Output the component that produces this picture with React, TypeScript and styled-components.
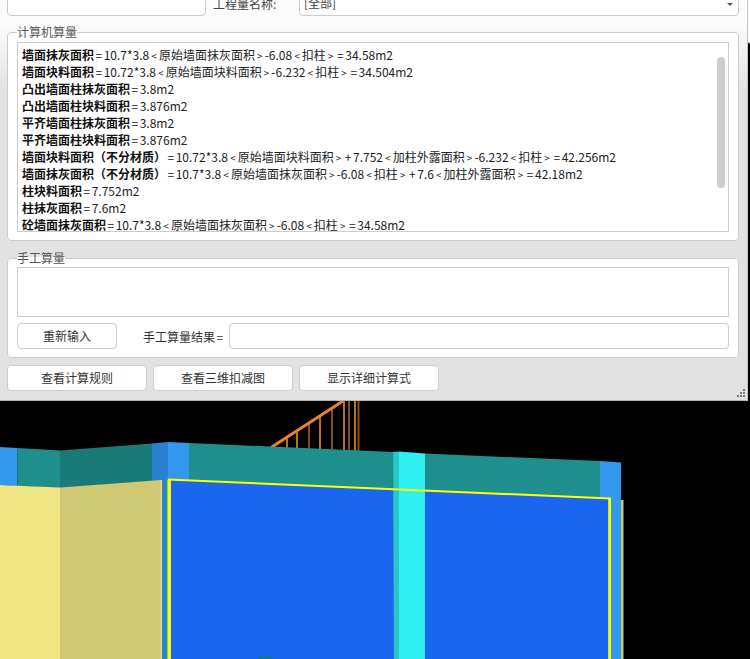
import React from 'react';
import styled, { createGlobalStyle } from 'styled-components';

const GlobalStyle = createGlobalStyle`
  html, body {
    margin: 0;
    padding: 0;
    background: linear-gradient(#fff 0, #fff 42px, #000 44px);
  }
  body {
    width: 750px;
    height: 659px;
    overflow: hidden;
    font-family: 'Noto Sans CJK SC', 'Liberation Sans', sans-serif;
    font-size: 12px;
    color: #222;
  }
`;

const lines: [string, string][] = [
  ['墙面抹灰面积', '=10.7*3.8<原始墙面抹灰面积>-6.08<扣柱>=34.58m2'],
  ['墙面块料面积', '=10.72*3.8<原始墙面块料面积>-6.232<扣柱>=34.504m2'],
  ['凸出墙面柱抹灰面积', '=3.8m2'],
  ['凸出墙面柱块料面积', '=3.876m2'],
  ['平齐墙面柱抹灰面积', '=3.8m2'],
  ['平齐墙面柱块料面积', '=3.876m2'],
  ['墙面块料面积（不分材质）', '=10.72*3.8<原始墙面块料面积>+7.752<加柱外露面积>-6.232<扣柱>=42.256m2'],
  ['墙面抹灰面积（不分材质）', '=10.7*3.8<原始墙面抹灰面积>-6.08<扣柱>+7.6<加柱外露面积>=42.18m2'],
  ['柱块料面积', '=7.752m2'],
  ['柱抹灰面积', '=7.6m2'],
  ['砼墙面抹灰面积', '=10.7*3.8<原始墙面抹灰面积>-6.08<扣柱>=34.58m2'],
];

// the operators are set wider than the rest of the text
const renderFormula = (formula: string) =>
  formula.split(/([<>=+])/).map((part, i) =>
    /^[<>=+]$/.test(part) ? (
      <Op key={i} $small={part === '<' || part === '>'}>
        {part}
      </Op>
    ) : (
      part
    ),
  );

const App = () => (
  <>
    <GlobalStyle />
    <Dialog>
      <TopRow>
        <TopInput />
        <TopLabel>工程量名称:</TopLabel>
        <Select>
          [全部]
          <Caret />
        </Select>
      </TopRow>

      <Group $height={209} $top={16} $pad={9}>
        <Legend>计算机算量</Legend>
        <ResultBox>
          {lines.map(([name, formula]) => (
            <Line key={name}>
              <b>{name}</b>
              {renderFormula(formula)}
            </Line>
          ))}
          <ScrollThumb />
        </ResultBox>
      </Group>

      <Group $height={100} $top={17} $pad={8}>
        <Legend>手工算量</Legend>
        <ManualBox />
        <ManualRow>
          <Button $width={100}>重新输入</Button>
          <ResultLabel>手工算量结果{renderFormula('=')}</ResultLabel>
          <ResultInput />
        </ManualRow>
      </Group>

      <ButtonRow>
        <Button $width={140}>查看计算规则</Button>
        <Button $width={140}>查看三维扣减图</Button>
        <Button $width={140}>显示详细计算式</Button>
      </ButtonRow>

      <Grip width="9" height="9" viewBox="0 0 9 9">
        <path
          fill="#777"
          d="M6 0h2v2H6zM3 3h2v2H3zM6 3h2v2H6zM0 6h2v2H0zM3 6h2v2H3zM6 6h2v2H6z"
        />
      </Grip>
    </Dialog>

    <Scene width="750" height="258" viewBox="0 401 750 258">
      {/* railing */}
      <path
        stroke="#f09a30"
        strokeWidth="1.5"
        d="M287 437V449M297 431V449M320 416V450M344 401V451M355 401V451"
      />
      <path
        stroke="#8a4c1c"
        strokeWidth="2"
        d="M309 423V450M332 408V451M358.5 401V452"
      />
      <path stroke="#a86a28" strokeWidth="1.5" d="M349 401V451" />
      <path stroke="#e8832c" strokeWidth="3" d="M271 447.5L343 401" />

      {/* beam */}
      <path fill="#3399ee" d="M0 447L17.5 448V486L0 485Z" />
      <path fill="#1e8f8c" d="M17.5 448L60 450.5V488L17.5 486Z" />
      <path fill="#1a7a78" d="M60 450.5L152 443.5V481L60 488Z" />
      <path fill="#2a80d0" d="M152 443.5L168 442V481H152Z" />
      <path fill="#3399ee" d="M168 442L189 443V481H168Z" />
      <path fill="#1e8f8c" d="M189 443L393 452V490L189 481Z" />
      <path fill="#1e8f8c" d="M425 453.5L600 461V499L425 492Z" />
      <path fill="#3399ee" d="M600 461L621 462.5V659H611V499H600Z" />
      <path fill="#cfc974" d="M621 500H623.5V659H621Z" />

      {/* left walls */}
      <path fill="#2a86c0" d="M160 480H168V659H160Z" />
      <path fill="#efe585" d="M0 485L60 487.5V659H0Z" />
      <path fill="#cfc974" d="M60 487.5L161 480V659H60Z" />
      <path fill="#e2dc9e" d="M160.5 480H162V659H160.5Z" />

      {/* selected wall */}
      <path fill="#1a66ee" d="M169 479.5L610 498.5V659H169Z" />
      <path fill="none" stroke="#ffff00" strokeWidth="3.5" d="M169.2 659V479.5" />
      <path fill="none" stroke="#ffff00" strokeWidth="2.8" d="M609.6 498V659" />

      {/* column */}
      <path fill="#28c8c8" d="M393 452L399 451.5V487H394V659H394Z" />
      <path fill="#28c8c8" d="M394 487H399V659H394Z" />
      <path fill="#2ef0f0" d="M399 451.5L425 453.5V659H399Z" />

      <path fill="none" stroke="#ffff00" strokeWidth="2" d="M168 479.5L611 498.5" />

      <path fill="none" stroke="#0c8a3c" strokeWidth="1.5" d="M259 659Q265 655 271 659" />
    </Scene>
  </>
);

const Dialog = styled.div`
  position: relative;
  box-sizing: border-box;
  width: 748px;
  height: 401px;
  padding: 0 8px 0 7px;
  overflow: hidden;
  background: linear-gradient(#fbfbfb 0, #fbfbfb 25px, #e2e2e2 90px);
  border-right: 1px solid #c4c4c4;
  border-bottom: 1px solid #b5b5b5;
`;

const TopRow = styled.div`
  display: flex;
  align-items: center;
  height: 26px;
  margin-top: -10px;
`;

const TopInput = styled.div`
  box-sizing: border-box;
  width: 199px;
  height: 26px;
  background: #fff;
  border: 1px solid #ccc;
  border-radius: 4px;
`;

const TopLabel = styled.span`
  margin: 1px 0 0 7px;
  width: 86px;
  color: #444;
`;

const Select = styled.div`
  position: relative;
  box-sizing: border-box;
  flex: 1;
  height: 26px;
  line-height: 24px;
  padding-left: 4px;
  color: #444;
  background: #fff;
  border: 1px solid #ccc;
  border-radius: 4px;
`;

const Caret = styled.span`
  position: absolute;
  right: 5px;
  top: 12px;
  border-top: 3px solid #555;
  border-left: 3px solid transparent;
  border-right: 3px solid transparent;
`;

const Group = styled.fieldset<{ $height: number; $top: number; $pad: number }>`
  position: relative;
  box-sizing: border-box;
  height: ${(p) => p.$height}px;
  margin: ${(p) => p.$top}px 0 0;
  padding: ${(p) => p.$pad}px 9px 0;
  min-width: 0;
  background: #fff;
  border: 1px solid #ccc;
  border-radius: 4px;
`;

const Legend = styled.span`
  position: absolute;
  left: 9px;
  top: -10px;
  line-height: 17px;
  color: #555;
  background: linear-gradient(transparent 0, transparent 50%, #fff 50%);
`;

const ResultBox = styled.div`
  position: relative;
  box-sizing: border-box;
  height: 190px;
  padding: 3px 4px 0;
  overflow: hidden;
  background: #fff;
  border: 1px solid #ccc;
`;

const Line = styled.div`
  height: 17px;
  line-height: 17px;
  white-space: pre;
  color: #222;
  b {
    font-weight: 700;
    color: #111;
  }
`;

const Op = styled.span<{ $small: boolean }>`
  display: inline-block;
  width: 9.7px;
  text-align: center;
  font-size: ${(p) => (p.$small ? 10 : 12)}px;
`;

const ScrollThumb = styled.div`
  position: absolute;
  right: 3px;
  top: 14px;
  width: 8px;
  height: 131px;
  background: #cdcdcd;
  border-radius: 4px;
`;

const ManualBox = styled.div`
  box-sizing: border-box;
  height: 50px;
  background: #fff;
  border: 1px solid #ccc;
`;

const ManualRow = styled.div`
  display: flex;
  align-items: center;
  margin-top: 6px;
`;

const Button = styled.div<{ $width: number }>`
  box-sizing: border-box;
  width: ${(p) => p.$width}px;
  height: 26px;
  line-height: 23px;
  text-align: center;
  color: #333;
  background: #fff;
  border: 1px solid #ccc;
  border-radius: 4px;
`;

const ResultLabel = styled.span`
  margin-left: 26px;
  width: 86px;
  line-height: 25px;
  color: #333;
`;

const ResultInput = styled.div`
  box-sizing: border-box;
  flex: 1;
  height: 26px;
  background: #fff;
  border: 1px solid #ccc;
  border-radius: 4px;
`;

const ButtonRow = styled.div`
  display: flex;
  gap: 6px;
  margin-top: 7px;
`;

const Grip = styled.svg`
  position: absolute;
  right: 1px;
  bottom: 2px;
`;

const Scene = styled.svg`
  display: block;
`;

export default App;
